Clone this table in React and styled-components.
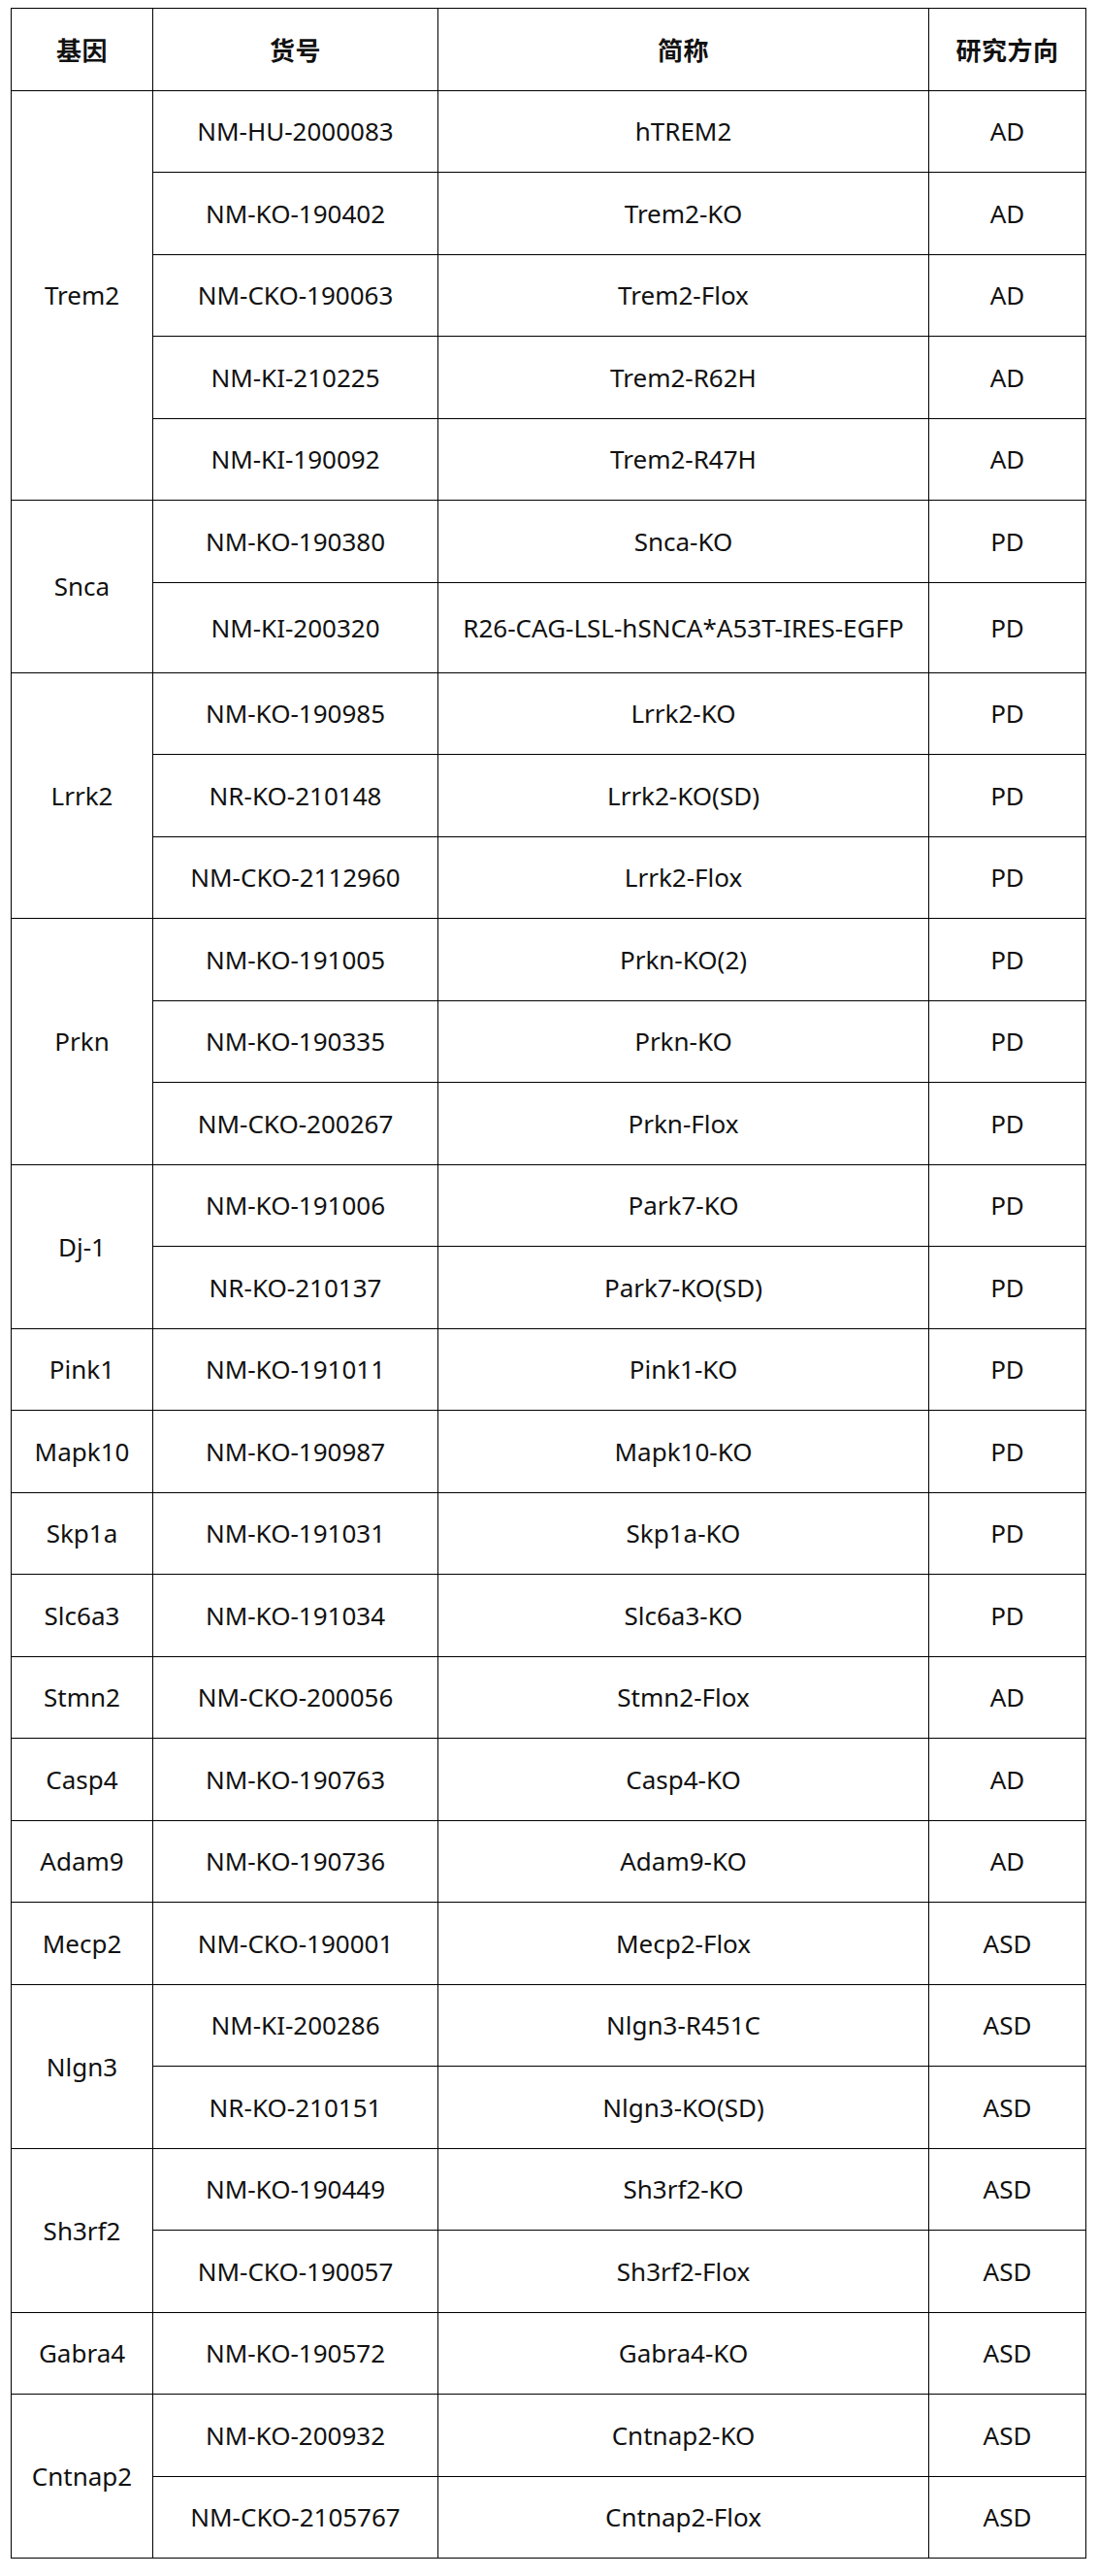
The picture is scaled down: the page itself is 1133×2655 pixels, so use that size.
import React from 'react'
import styled, { createGlobalStyle } from 'styled-components'

const GlobalStyle = createGlobalStyle`
    html, body {
        margin: 0;
        padding: 0;
        background: #fff;
    }
    body {
        font-family: "Noto Sans", "Noto Sans CJK SC", sans-serif;
        color: #111;
    }
`

const Page = styled.div`
    padding: 8px 0 18px 11px;
`

const Table = styled.table`
    border-collapse: collapse;
    table-layout: fixed;
    width: 1108px;
    font-size: 26px;
`

const Row = styled.tr`
    height: ${props => props.tall ? '93px' : '84.5px'};
`

const HeadCell = styled.th`
    border: 1px solid #000;
    padding: 0;
    font-family: "Noto Sans CJK SC", "Noto Sans", sans-serif;
    font-weight: 700;
    text-align: center;
    vertical-align: middle;
    letter-spacing: 0.5px;
`

const Cell = styled.td`
    border: 1px solid #000;
    padding: 0;
    text-align: center;
    vertical-align: middle;
    white-space: nowrap;
`

// 基因 -> list of [货号, 简称, 研究方向]
const groups = [
    ['Trem2', [
        ['NM-HU-2000083', 'hTREM2', 'AD'],
        ['NM-KO-190402', 'Trem2-KO', 'AD'],
        ['NM-CKO-190063', 'Trem2-Flox', 'AD'],
        ['NM-KI-210225', 'Trem2-R62H', 'AD'],
        ['NM-KI-190092', 'Trem2-R47H', 'AD'],
    ]],
    ['Snca', [
        ['NM-KO-190380', 'Snca-KO', 'PD'],
        ['NM-KI-200320', 'R26-CAG-LSL-hSNCA*A53T-IRES-EGFP', 'PD', true],
    ]],
    ['Lrrk2', [
        ['NM-KO-190985', 'Lrrk2-KO', 'PD'],
        ['NR-KO-210148', 'Lrrk2-KO(SD)', 'PD'],
        ['NM-CKO-2112960', 'Lrrk2-Flox', 'PD'],
    ]],
    ['Prkn', [
        ['NM-KO-191005', 'Prkn-KO(2)', 'PD'],
        ['NM-KO-190335', 'Prkn-KO', 'PD'],
        ['NM-CKO-200267', 'Prkn-Flox', 'PD'],
    ]],
    ['Dj-1', [
        ['NM-KO-191006', 'Park7-KO', 'PD'],
        ['NR-KO-210137', 'Park7-KO(SD)', 'PD'],
    ]],
    ['Pink1', [['NM-KO-191011', 'Pink1-KO', 'PD']]],
    ['Mapk10', [['NM-KO-190987', 'Mapk10-KO', 'PD']]],
    ['Skp1a', [['NM-KO-191031', 'Skp1a-KO', 'PD']]],
    ['Slc6a3', [['NM-KO-191034', 'Slc6a3-KO', 'PD']]],
    ['Stmn2', [['NM-CKO-200056', 'Stmn2-Flox', 'AD']]],
    ['Casp4', [['NM-KO-190763', 'Casp4-KO', 'AD']]],
    ['Adam9', [['NM-KO-190736', 'Adam9-KO', 'AD']]],
    ['Mecp2', [['NM-CKO-190001', 'Mecp2-Flox', 'ASD']]],
    ['Nlgn3', [
        ['NM-KI-200286', 'Nlgn3-R451C', 'ASD'],
        ['NR-KO-210151', 'Nlgn3-KO(SD)', 'ASD'],
    ]],
    ['Sh3rf2', [
        ['NM-KO-190449', 'Sh3rf2-KO', 'ASD'],
        ['NM-CKO-190057', 'Sh3rf2-Flox', 'ASD'],
    ]],
    ['Gabra4', [['NM-KO-190572', 'Gabra4-KO', 'ASD']]],
    ['Cntnap2', [
        ['NM-KO-200932', 'Cntnap2-KO', 'ASD'],
        ['NM-CKO-2105767', 'Cntnap2-Flox', 'ASD'],
    ]],
]

function App() {
    return (
        <Page>
            <GlobalStyle />
            <Table>
                <colgroup>
                    <col style={{width: '146px'}} />
                    <col style={{width: '294px'}} />
                    <col style={{width: '506px'}} />
                    <col style={{width: '162px'}} />
                </colgroup>
                <thead>
                    <Row>
                        <HeadCell>基因</HeadCell>
                        <HeadCell>货号</HeadCell>
                        <HeadCell>简称</HeadCell>
                        <HeadCell>研究方向</HeadCell>
                    </Row>
                </thead>
                <tbody>
                    {groups.map(([gene, items]) =>
                        items.map(([code, name, area, tall], i) => (
                            <Row key={code} tall={tall}>
                                {i === 0 && <Cell rowSpan={items.length}>{gene}</Cell>}
                                <Cell>{code}</Cell>
                                <Cell>{name}</Cell>
                                <Cell>{area}</Cell>
                            </Row>
                        ))
                    )}
                </tbody>
            </Table>
        </Page>
    )
}

export default App
